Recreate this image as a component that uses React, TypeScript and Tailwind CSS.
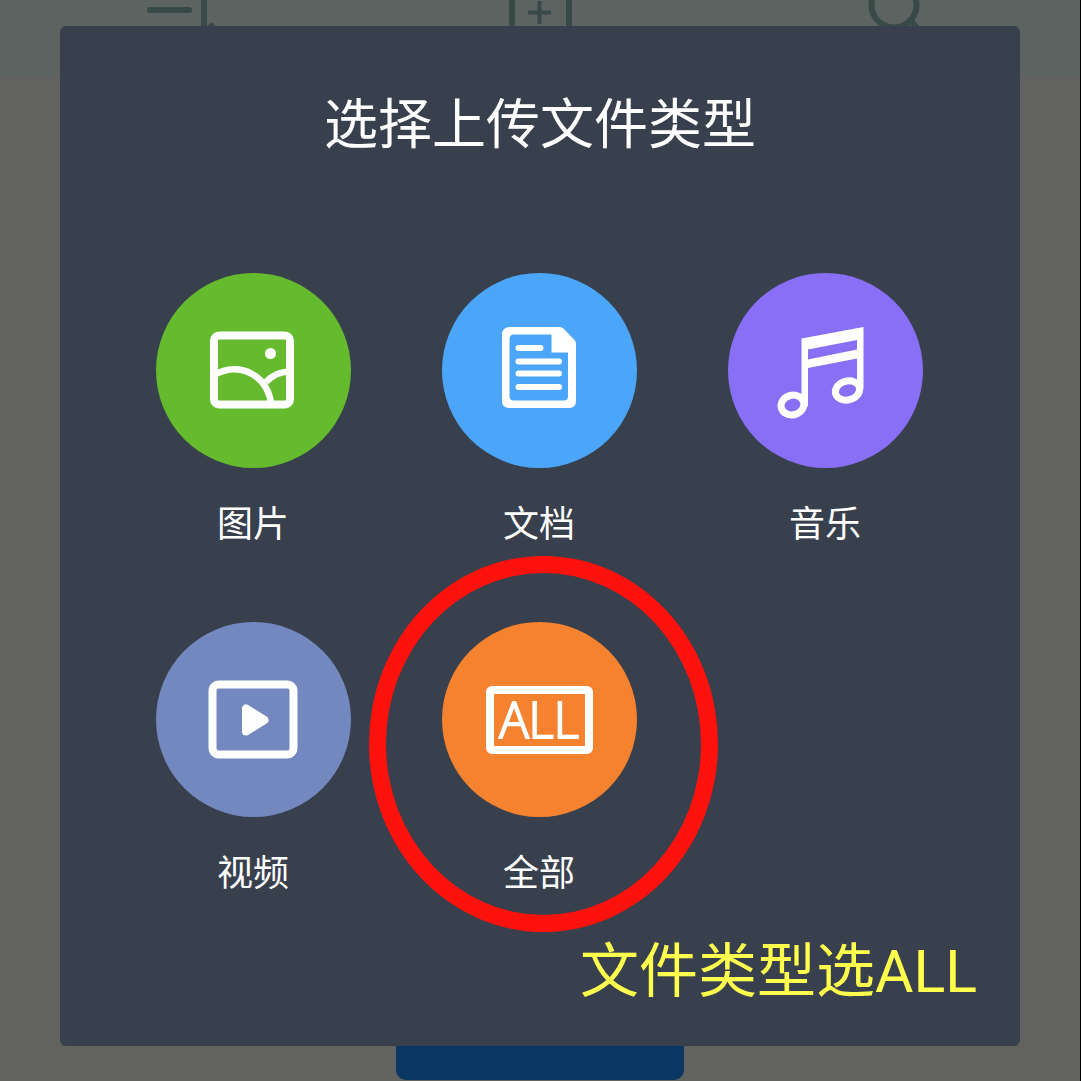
import type { ReactNode } from "react";

interface FileType {
  label: string;
  color: string;
  icon: ReactNode;
  marked?: boolean;
}

const ImageIcon = () => (
  <svg viewBox="0 0 195 195" className="size-full" fill="none" stroke="#fff" aria-hidden="true">
    <rect x="58" y="62.500" width="76" height="69" rx="5" strokeWidth="8" />
    <path d="M59 101.500C84 88 112 102 115.500 133" strokeWidth="6.500" />
    <path d="M110 109C116 102.500 124 98.500 135 98.500" strokeWidth="6.500" />
    <circle cx="114.500" cy="80.500" r="5.500" fill="#fff" stroke="none" />
  </svg>
);

const DocIcon = () => (
  <svg viewBox="0 0 195 195" className="size-full" fill="none" stroke="#fff" aria-hidden="true">
    <path
      d="M68 54H118Q120 54 121.500 55.500L132.500 67Q134 68.500 134 71V128Q134 135 127 135H67Q60 135 60 128V62Q60 54 68 54ZM71 61.500Q67.500 62 67.500 66V123Q67.500 127.500 72 127.500H122Q126 127.500 126 123V79.500H109.500V61.500Z"
      fill="#fff"
      fillRule="evenodd"
      stroke="none"
    />
    <path d="M76.500 75H98.500M76.500 88.500H117M76.500 100.500H117M76.500 114H117" strokeWidth="6" strokeLinecap="round" />
  </svg>
);

const MusicIcon = () => (
  <svg viewBox="0 0 195 195" className="size-full" aria-hidden="true">
    <path
      d="M73.500 65.500L135.500 54V116H129V85.500L80 95V133H73.500ZM80 76.500V86.500L129 76.500V67Z"
      fill="#fff"
      fillRule="evenodd"
    />
    <g fill="none" stroke="#fff" strokeWidth="7">
      <ellipse cx="64.500" cy="132" rx="11.500" ry="9.800" transform="rotate(-14 64.500 132)" />
      <ellipse cx="119.500" cy="117.500" rx="12.300" ry="9.500" transform="rotate(-14 119.500 117.500)" />
    </g>
  </svg>
);

const VideoIcon = () => (
  <svg viewBox="0 0 195 195" className="size-full" fill="none" stroke="#fff" aria-hidden="true">
    <rect x="56.500" y="62.500" width="81" height="70" rx="6" strokeWidth="8" />
    <path d="M90 86.500V109.500L108.500 98Z" fill="#fff" strokeWidth="8" strokeLinejoin="round" />
  </svg>
);

const AllIcon = () => (
  <span className="flex h-[68px] w-[107px] items-center justify-center rounded-md border-8 border-white font-['Open_Sans',sans-serif] text-[49px] leading-none font-light text-white [-webkit-text-stroke:2px_#fff]">
    ALL
  </span>
);

const fileTypes: FileType[] = [
  { label: "图片", color: "bg-[#65ba2e]", icon: <ImageIcon /> },
  { label: "文档", color: "bg-[#4ba6f9]", icon: <DocIcon /> },
  { label: "音乐", color: "bg-[#896ff5]", icon: <MusicIcon /> },
  { label: "视频", color: "bg-[#7288be]", icon: <VideoIcon /> },
  { label: "全部", color: "bg-[#f5822f]", icon: <AllIcon />, marked: true },
];

const Toolbar = () => (
  <header className="grid h-[78px] grid-cols-3 items-start justify-items-center bg-[#5c6361] text-[#384a47]">
    <button type="button" aria-label="排序">
      <svg viewBox="0 0 72 72" className="size-[72px]" fill="none" stroke="currentColor" strokeWidth="6" strokeLinecap="round">
        <path d="M6 10H45M6 30H38M6 50H32" />
        <path d="M60 -4V50M60 36L67.500 26" />
      </svg>
    </button>
    <button type="button" aria-label="新建">
      <svg viewBox="0 0 72 72" className="size-[72px]" fill="none" stroke="currentColor">
        <path d="M8 -6V40H65V-6" strokeWidth="6" />
        <path d="M35.500 1V24M24 12.500H47" strokeWidth="4" />
      </svg>
    </button>
    <button type="button" aria-label="搜索">
      <svg viewBox="0 0 72 72" className="size-[72px]" fill="none" stroke="currentColor" strokeWidth="6">
        <circle cx="30" cy="5" r="22.500" />
        <path d="M46 20L62 38" strokeLinecap="round" />
      </svg>
    </button>
  </header>
);

function App() {
  return (
    <div className="relative flex min-h-screen flex-col border-r border-black bg-[#62635f] font-['Noto_Sans_CJK_SC',sans-serif]">
      <Toolbar />
      <div className="mt-auto flex justify-center pb-px">
        <button type="button" aria-label="上传" className="h-24 w-72 rounded-[10px] bg-[#0a3761]" />
      </div>

      <div className="absolute inset-0 flex items-start px-[60px] pt-[26px]">
        <div role="dialog" aria-labelledby="dialog-title" className="w-full rounded-md bg-[#383f4d] pt-[59px] pb-[38px]">
          <h1 id="dialog-title" className="text-center text-[54px] leading-[72px] text-white">
            选择上传文件类型
          </h1>
          <div className="mt-[116px] grid grid-cols-3 gap-y-[77px] pr-[52px] pl-[50px]">
            {fileTypes.map((type) => (
              <div key={type.label} className="relative flex justify-center">
                <button type="button" className="flex flex-col items-center gap-[29px]">
                  <span className={`flex size-[195px] items-center justify-center rounded-full ${type.color}`}>
                    {type.icon}
                  </span>
                  <span className="text-4xl leading-[48px] text-white">{type.label}</span>
                </button>
                {type.marked && (
                  <span className="pointer-events-none absolute -top-[66px] -left-[27px] h-[376px] w-[349px] rounded-[50%] border-[17px] border-[#ff110d]" />
                )}
              </div>
            ))}
          </div>
          <p className="mt-[42px] pr-[43px] text-right font-['Roboto','Noto_Sans_CJK_SC',sans-serif] text-[59px] leading-[72px] text-[#ffff4d]">
            文件类型选ALL
          </p>
        </div>
      </div>
    </div>
  );
}

export default App;
